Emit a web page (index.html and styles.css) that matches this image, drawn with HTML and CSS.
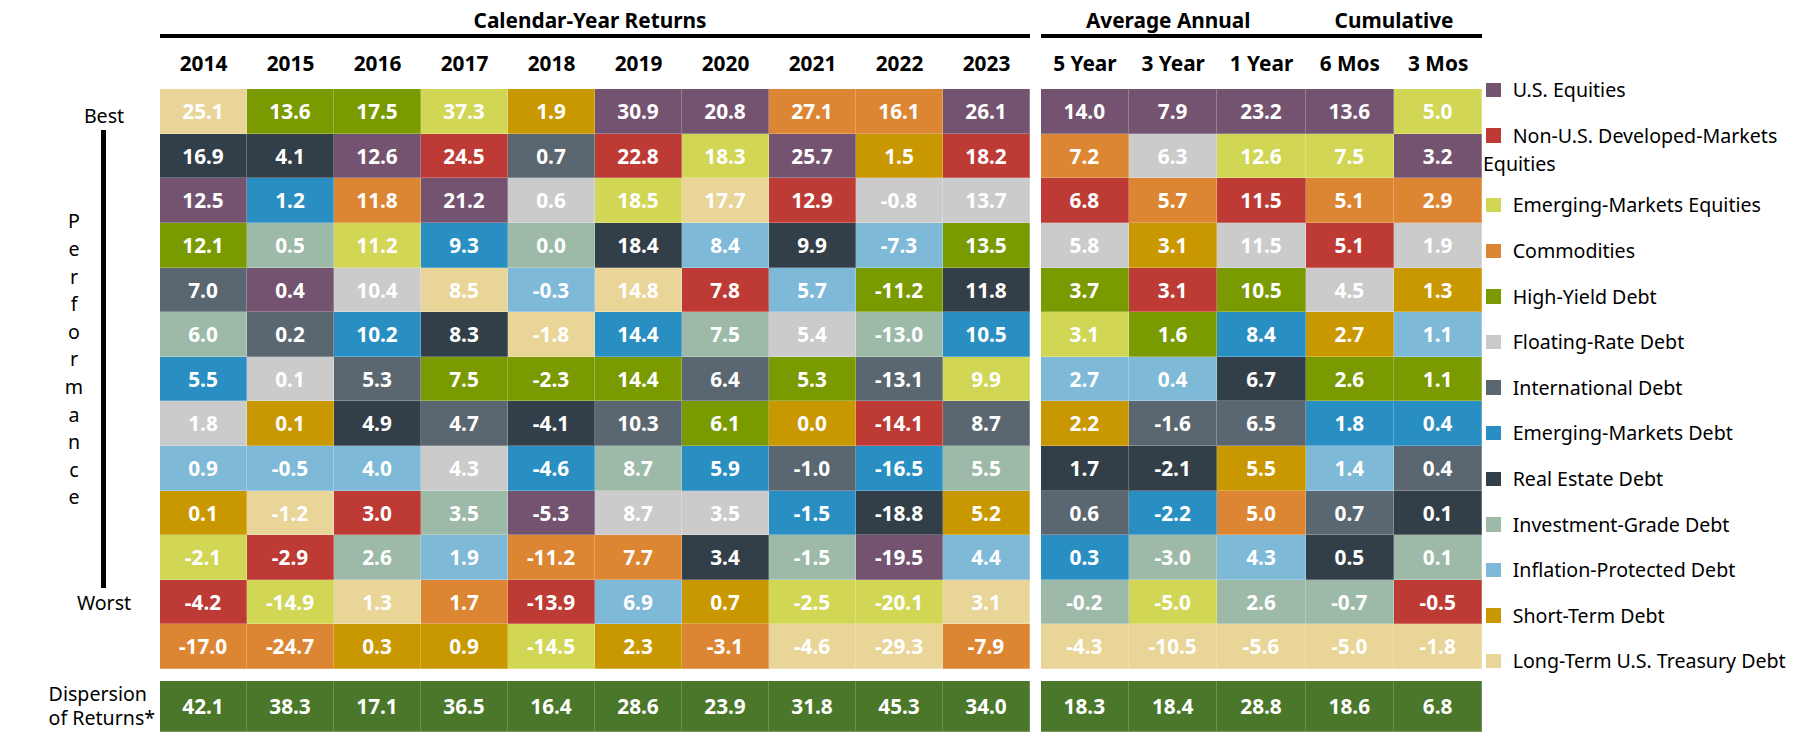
FILE: index.html
```html
<!DOCTYPE html>
<html lang="en">
<head>
<meta charset="utf-8">
<title>Asset Class Returns</title>
<link rel="stylesheet" href="styles.css">
</head>
<body>
<div class="chart">
  <div class="side">
    <div class="side-head"></div>
    <div class="perf">
      <div class="tag tag-best">Best</div>
      <div class="perf-mid">
        <div class="letters"><span>P</span><span>e</span><span>r</span><span>f</span><span>o</span><span>r</span><span>m</span><span>a</span><span>n</span><span>c</span><span>e</span></div>
        <div class="bar"></div>
      </div>
      <div class="tag tag-worst">Worst</div>
    </div>
    <div class="disp-label">Dispersion<br>of Returns*</div>
  </div>

  <div class="sec sec-cal">
    <div class="grp-row"><div class="grp grp-full">Calendar-Year Returns</div></div>
    <div class="rule"></div>
    <div class="years cols10"><div>2014</div><div>2015</div><div>2016</div><div>2017</div><div>2018</div><div>2019</div><div>2020</div><div>2021</div><div>2022</div><div>2023</div></div>
    <div class="cells cols10">
      <div class="c lt">25.1</div><div class="c hy">13.6</div><div class="c hy">17.5</div><div class="c eme">37.3</div><div class="c st">1.9</div><div class="c us">30.9</div><div class="c us">20.8</div><div class="c com">27.1</div><div class="c com">16.1</div><div class="c us">26.1</div>
      <div class="c re">16.9</div><div class="c re">4.1</div><div class="c us">12.6</div><div class="c nus">24.5</div><div class="c int">0.7</div><div class="c nus">22.8</div><div class="c eme">18.3</div><div class="c us">25.7</div><div class="c st">1.5</div><div class="c nus">18.2</div>
      <div class="c us">12.5</div><div class="c emd">1.2</div><div class="c com">11.8</div><div class="c us">21.2</div><div class="c fr">0.6</div><div class="c eme">18.5</div><div class="c lt">17.7</div><div class="c nus">12.9</div><div class="c fr">-0.8</div><div class="c fr">13.7</div>
      <div class="c hy">12.1</div><div class="c ig">0.5</div><div class="c eme">11.2</div><div class="c emd">9.3</div><div class="c ig">0.0</div><div class="c re">18.4</div><div class="c ip">8.4</div><div class="c re">9.9</div><div class="c ip">-7.3</div><div class="c hy">13.5</div>
      <div class="c int">7.0</div><div class="c us">0.4</div><div class="c fr">10.4</div><div class="c lt">8.5</div><div class="c ip">-0.3</div><div class="c lt">14.8</div><div class="c nus">7.8</div><div class="c ip">5.7</div><div class="c hy">-11.2</div><div class="c re">11.8</div>
      <div class="c ig">6.0</div><div class="c int">0.2</div><div class="c emd">10.2</div><div class="c re">8.3</div><div class="c lt">-1.8</div><div class="c emd">14.4</div><div class="c ig">7.5</div><div class="c fr">5.4</div><div class="c ig">-13.0</div><div class="c emd">10.5</div>
      <div class="c emd">5.5</div><div class="c fr">0.1</div><div class="c int">5.3</div><div class="c hy">7.5</div><div class="c hy">-2.3</div><div class="c hy">14.4</div><div class="c int">6.4</div><div class="c hy">5.3</div><div class="c int">-13.1</div><div class="c eme">9.9</div>
      <div class="c fr">1.8</div><div class="c st">0.1</div><div class="c re">4.9</div><div class="c int">4.7</div><div class="c re">-4.1</div><div class="c int">10.3</div><div class="c hy">6.1</div><div class="c st">0.0</div><div class="c nus">-14.1</div><div class="c int">8.7</div>
      <div class="c ip">0.9</div><div class="c ip">-0.5</div><div class="c ip">4.0</div><div class="c fr">4.3</div><div class="c emd">-4.6</div><div class="c ig">8.7</div><div class="c emd">5.9</div><div class="c int">-1.0</div><div class="c emd">-16.5</div><div class="c ig">5.5</div>
      <div class="c st">0.1</div><div class="c lt">-1.2</div><div class="c nus">3.0</div><div class="c ig">3.5</div><div class="c us">-5.3</div><div class="c fr">8.7</div><div class="c fr">3.5</div><div class="c emd">-1.5</div><div class="c re">-18.8</div><div class="c st">5.2</div>
      <div class="c eme">-2.1</div><div class="c nus">-2.9</div><div class="c ig">2.6</div><div class="c ip">1.9</div><div class="c com">-11.2</div><div class="c com">7.7</div><div class="c re">3.4</div><div class="c ig">-1.5</div><div class="c us">-19.5</div><div class="c ip">4.4</div>
      <div class="c nus">-4.2</div><div class="c eme">-14.9</div><div class="c lt">1.3</div><div class="c com">1.7</div><div class="c nus">-13.9</div><div class="c ip">6.9</div><div class="c st">0.7</div><div class="c eme">-2.5</div><div class="c eme">-20.1</div><div class="c lt">3.1</div>
      <div class="c com">-17.0</div><div class="c com">-24.7</div><div class="c st">0.3</div><div class="c st">0.9</div><div class="c eme">-14.5</div><div class="c st">2.3</div><div class="c com">-3.1</div><div class="c lt">-4.6</div><div class="c lt">-29.3</div><div class="c com">-7.9</div>
    </div>
    <div class="disp cols10">
      <div class="d">42.1</div><div class="d">38.3</div><div class="d">17.1</div><div class="d">36.5</div><div class="d">16.4</div><div class="d">28.6</div><div class="d">23.9</div><div class="d">31.8</div><div class="d">45.3</div><div class="d">34.0</div>
    </div>
  </div>

  <div class="sec sec-avg">
    <div class="grp-row"><div class="grp grp-avg">Average Annual</div><div class="grp grp-cum">Cumulative</div></div>
    <div class="rule"></div>
    <div class="years cols5"><div>5 Year</div><div>3 Year</div><div>1 Year</div><div>6 Mos</div><div>3 Mos</div></div>
    <div class="cells cols5">
      <div class="c us">14.0</div><div class="c us">7.9</div><div class="c us">23.2</div><div class="c us">13.6</div><div class="c eme">5.0</div>
      <div class="c com">7.2</div><div class="c fr">6.3</div><div class="c eme">12.6</div><div class="c eme">7.5</div><div class="c us">3.2</div>
      <div class="c nus">6.8</div><div class="c com">5.7</div><div class="c nus">11.5</div><div class="c com">5.1</div><div class="c com">2.9</div>
      <div class="c fr">5.8</div><div class="c st">3.1</div><div class="c fr">11.5</div><div class="c nus">5.1</div><div class="c fr">1.9</div>
      <div class="c hy">3.7</div><div class="c nus">3.1</div><div class="c hy">10.5</div><div class="c fr">4.5</div><div class="c st">1.3</div>
      <div class="c eme">3.1</div><div class="c hy">1.6</div><div class="c emd">8.4</div><div class="c st">2.7</div><div class="c ip">1.1</div>
      <div class="c ip">2.7</div><div class="c ip">0.4</div><div class="c re">6.7</div><div class="c hy">2.6</div><div class="c hy">1.1</div>
      <div class="c st">2.2</div><div class="c int">-1.6</div><div class="c int">6.5</div><div class="c emd">1.8</div><div class="c emd">0.4</div>
      <div class="c re">1.7</div><div class="c re">-2.1</div><div class="c st">5.5</div><div class="c ip">1.4</div><div class="c int">0.4</div>
      <div class="c int">0.6</div><div class="c emd">-2.2</div><div class="c com">5.0</div><div class="c int">0.7</div><div class="c re">0.1</div>
      <div class="c emd">0.3</div><div class="c ig">-3.0</div><div class="c ip">4.3</div><div class="c re">0.5</div><div class="c ig">0.1</div>
      <div class="c ig">-0.2</div><div class="c eme">-5.0</div><div class="c ig">2.6</div><div class="c ig">-0.7</div><div class="c nus">-0.5</div>
      <div class="c lt">-4.3</div><div class="c lt">-10.5</div><div class="c lt">-5.6</div><div class="c lt">-5.0</div><div class="c lt">-1.8</div>
    </div>
    <div class="disp cols5">
      <div class="d">18.3</div><div class="d">18.4</div><div class="d">28.8</div><div class="d">18.6</div><div class="d">6.8</div>
    </div>
  </div>

  <div class="legend">
    <div class="li"><span class="sw us"></span>U.S. Equities</div>
    <div class="li li-wrap"><span class="sw nus"></span>Non-U.S. Developed-Markets<br>Equities</div>
    <div class="li"><span class="sw eme"></span>Emerging-Markets Equities</div>
    <div class="li"><span class="sw com"></span>Commodities</div>
    <div class="li"><span class="sw hy"></span>High-Yield Debt</div>
    <div class="li"><span class="sw fr"></span>Floating-Rate Debt</div>
    <div class="li"><span class="sw int"></span>International Debt</div>
    <div class="li"><span class="sw emd"></span>Emerging-Markets Debt</div>
    <div class="li"><span class="sw re"></span>Real Estate Debt</div>
    <div class="li"><span class="sw ig"></span>Investment-Grade Debt</div>
    <div class="li"><span class="sw ip"></span>Inflation-Protected Debt</div>
    <div class="li"><span class="sw st"></span>Short-Term Debt</div>
    <div class="li"><span class="sw lt"></span>Long-Term U.S. Treasury Debt</div>
  </div>
</div>
</body>
</html>
```

FILE: styles.css
```css
* { box-sizing: border-box; }

body {
  margin: 0;
  background: #ffffff;
  color: #000000;
  font-family: "Noto Sans", "Open Sans", "DejaVu Sans", sans-serif;
}

.chart {
  display: flex;
  align-items: flex-start;
}

/* left labels */
.side {
  width: 160px;
  flex: none;
  display: flex;
  flex-direction: column;
}
.side-head { height: 89.2px; }
.perf {
  height: 579.8px;
  display: flex;
  flex-direction: column;
}
.tag {
  width: 80px;
  margin-left: 64px;
  text-align: center;
  font-size: 19.6px;
  line-height: 24px;
}
.tag-best { margin-top: 15.3px; }
.tag-worst { margin-top: 2.9px; }
.perf-mid {
  margin-top: 1.5px;
  height: 458.3px;
  display: flex;
  align-items: center;
}
.letters {
  width: 20px;
  margin-left: 64px;
  display: flex;
  flex-direction: column;
  align-items: center;
  font-size: 19.6px;
  line-height: 27.6px;
}
.bar {
  width: 4.6px;
  height: 100%;
  margin-left: 17px;
  background: #000000;
}
.disp-label {
  margin-top: 11.7px;
  height: 51px;
  padding-top: 1.3px;
  padding-left: 48.6px;
  font-size: 19.6px;
  line-height: 24px;
}

/* sections */
.sec {
  flex: none;
  display: flex;
  flex-direction: column;
}
.sec-cal { width: 870px; }
.sec-avg { width: 441.7px; margin-left: 10.7px; }

.grp-row {
  height: 33.5px;
  padding-top: 8.2px;
  display: flex;
  font-weight: 700;
  font-size: 20.8px;
  line-height: 24px;
}
.grp { text-align: center; }
.grp-full { flex: 1; padding-right: 10px; }
.grp-avg { width: 265px; padding-right: 10px; }
.grp-cum { width: 176.7px; }

.rule {
  height: 4px;
  background: #000000;
}

.years {
  display: grid;
  height: 51.7px;
  padding-top: 13.4px;
  font-weight: 700;
  font-size: 20.8px;
  line-height: 24px;
  text-align: center;
  white-space: nowrap;
}
.cols10 { grid-template-columns: repeat(10, 87px); }
.cols5 { grid-template-columns: repeat(5, 88.34px); }

.cells {
  display: grid;
  grid-auto-rows: 44.6px;
}
.c {
  color: #ffffff;
  font-weight: 700;
  font-size: 20.8px;
  line-height: 44.6px;
  text-align: center;
  border-right: 1px solid rgba(255, 255, 255, 0.25);
  border-bottom: 1px solid rgba(255, 255, 255, 0.25);
}

.disp {
  display: grid;
  margin-top: 11.7px;
  height: 51px;
}
.d {
  background: #4a7729;
  color: #ffffff;
  font-weight: 700;
  font-size: 20.8px;
  line-height: 50px;
  text-align: center;
  border-right: 1px solid rgba(255, 255, 255, 0.2);
  border-bottom: 1px solid rgba(255, 255, 255, 0.25);
}

/* legend */
.legend {
  flex: 1;
  padding-top: 76.2px;
  padding-left: 0.6px;
  font-size: 19.6px;
  line-height: 28.4px;
  white-space: nowrap;
}
.li { margin-bottom: 17.2px; }
.li-wrap { margin-bottom: 12.9px; }
.sw {
  display: inline-block;
  width: 15px;
  height: 14.4px;
  margin-left: 3px;
  margin-right: 11.7px;
}

/* asset class colours */
.us  { background: #735370; }
.nus { background: #be3a34; }
.eme { background: #d1d655; }
.com { background: #dc8633; }
.hy  { background: #7a9a01; }
.fr  { background: #cbcbcb; }
.int { background: #5b6770; }
.emd { background: #298fc2; }
.re  { background: #333f48; }
.ig  { background: #9cbaa7; }
.ip  { background: #7fb9d8; }
.st  { background: #c99700; }
.lt  { background: #e8d597; }
```
